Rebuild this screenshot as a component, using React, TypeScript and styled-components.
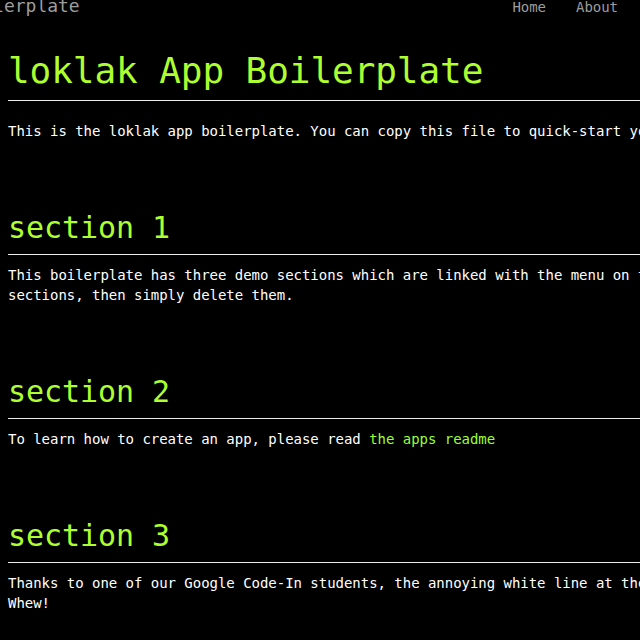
import React from "react";
import styled, { createGlobalStyle } from "styled-components";

const GlobalStyle = createGlobalStyle`
  html, body {
    margin: 0;
    padding: 0;
    background: #000;
    overflow: hidden;
  }
  body {
    font-family: "DejaVu Sans Mono", "Liberation Mono", monospace;
    font-size: 14px;
    line-height: 20px;
    letter-spacing: -0.03px;
    color: #fff;
  }
`;

const Navbar = styled.nav`
  display: flex;
  align-items: baseline;
  height: 20px;
  margin-top: -4px;
  width: 100%;
  white-space: nowrap;
`;

const Brand = styled.a`
  flex-shrink: 0;
  margin-left: -158px;
  font-size: 18px;
  line-height: 20px;
  letter-spacing: -0.036px;
  color: #9d9d9d;
  text-decoration: none;
`;

const NavLinks = styled.ul`
  display: flex;
  list-style: none;
  margin: 0 0 0 auto;
  padding: 0 7px 0 0;
`;

const NavLink = styled.a`
  display: block;
  padding: 0 15px;
  color: #9d9d9d;
  text-decoration: none;
`;

const Main = styled.main`
  width: 940px;
  padding-left: 8px;
`;

const Header = styled.header`
  margin-top: 35px;
`;

const Heading = styled.h1<{ $size: number; $pad: number }>`
  margin: 0;
  padding-bottom: ${(p) => p.$pad}px;
  border-bottom: 1px solid #eee;
  font-family: "DejaVu Sans Mono", "Liberation Mono", monospace;
  font-weight: normal;
  font-size: ${(p) => p.$size}px;
  letter-spacing: -0.002em;
  line-height: 1.1;
  color: #adff2f;
`;

const Text = styled.p<{ $gap: number }>`
  margin: ${(p) => p.$gap}px 0 10px;
`;

const Section = styled.section`
  padding-top: 60px;
`;

const Link = styled.a`
  color: #99ff33;
  text-decoration: none;
`;

export default function App() {
  return (
    <>
      <GlobalStyle />
      <Navbar>
        <Brand href="#">loklak App Boilerplate</Brand>
        <NavLinks>
          <li>
            <NavLink href="#">Home</NavLink>
          </li>
          <li>
            <NavLink href="#">About</NavLink>
          </li>
        </NavLinks>
      </Navbar>
      <Main>
        <Header>
          <Heading $size={36} $pad={9}>loklak App Boilerplate</Heading>
          <Text $gap={20}>
            This is the loklak app boilerplate. You can copy this file to quick-start your own app.
          </Text>
        </Header>
        <Section id="section1">
          <Heading as="h2" $size={30} $pad={10}>section 1</Heading>
          <Text $gap={10}>
            This boilerplate has three demo sections which are linked with the menu on the top. If you don't need the
            sections, then simply delete them.
          </Text>
        </Section>
        <Section id="section2">
          <Heading as="h2" $size={30} $pad={10}>section 2</Heading>
          <Text $gap={10}>
            To learn how to create an app, please read <Link href="#">the apps readme</Link>
          </Text>
        </Section>
        <Section id="section3">
          <Heading as="h2" $size={30} $pad={10}>section 3</Heading>
          <Text $gap={10}>
            Thanks to one of our Google Code-In students, the annoying white line at the bottom of the page was removed.
            Whew!
          </Text>
        </Section>
      </Main>
    </>
  );
}
